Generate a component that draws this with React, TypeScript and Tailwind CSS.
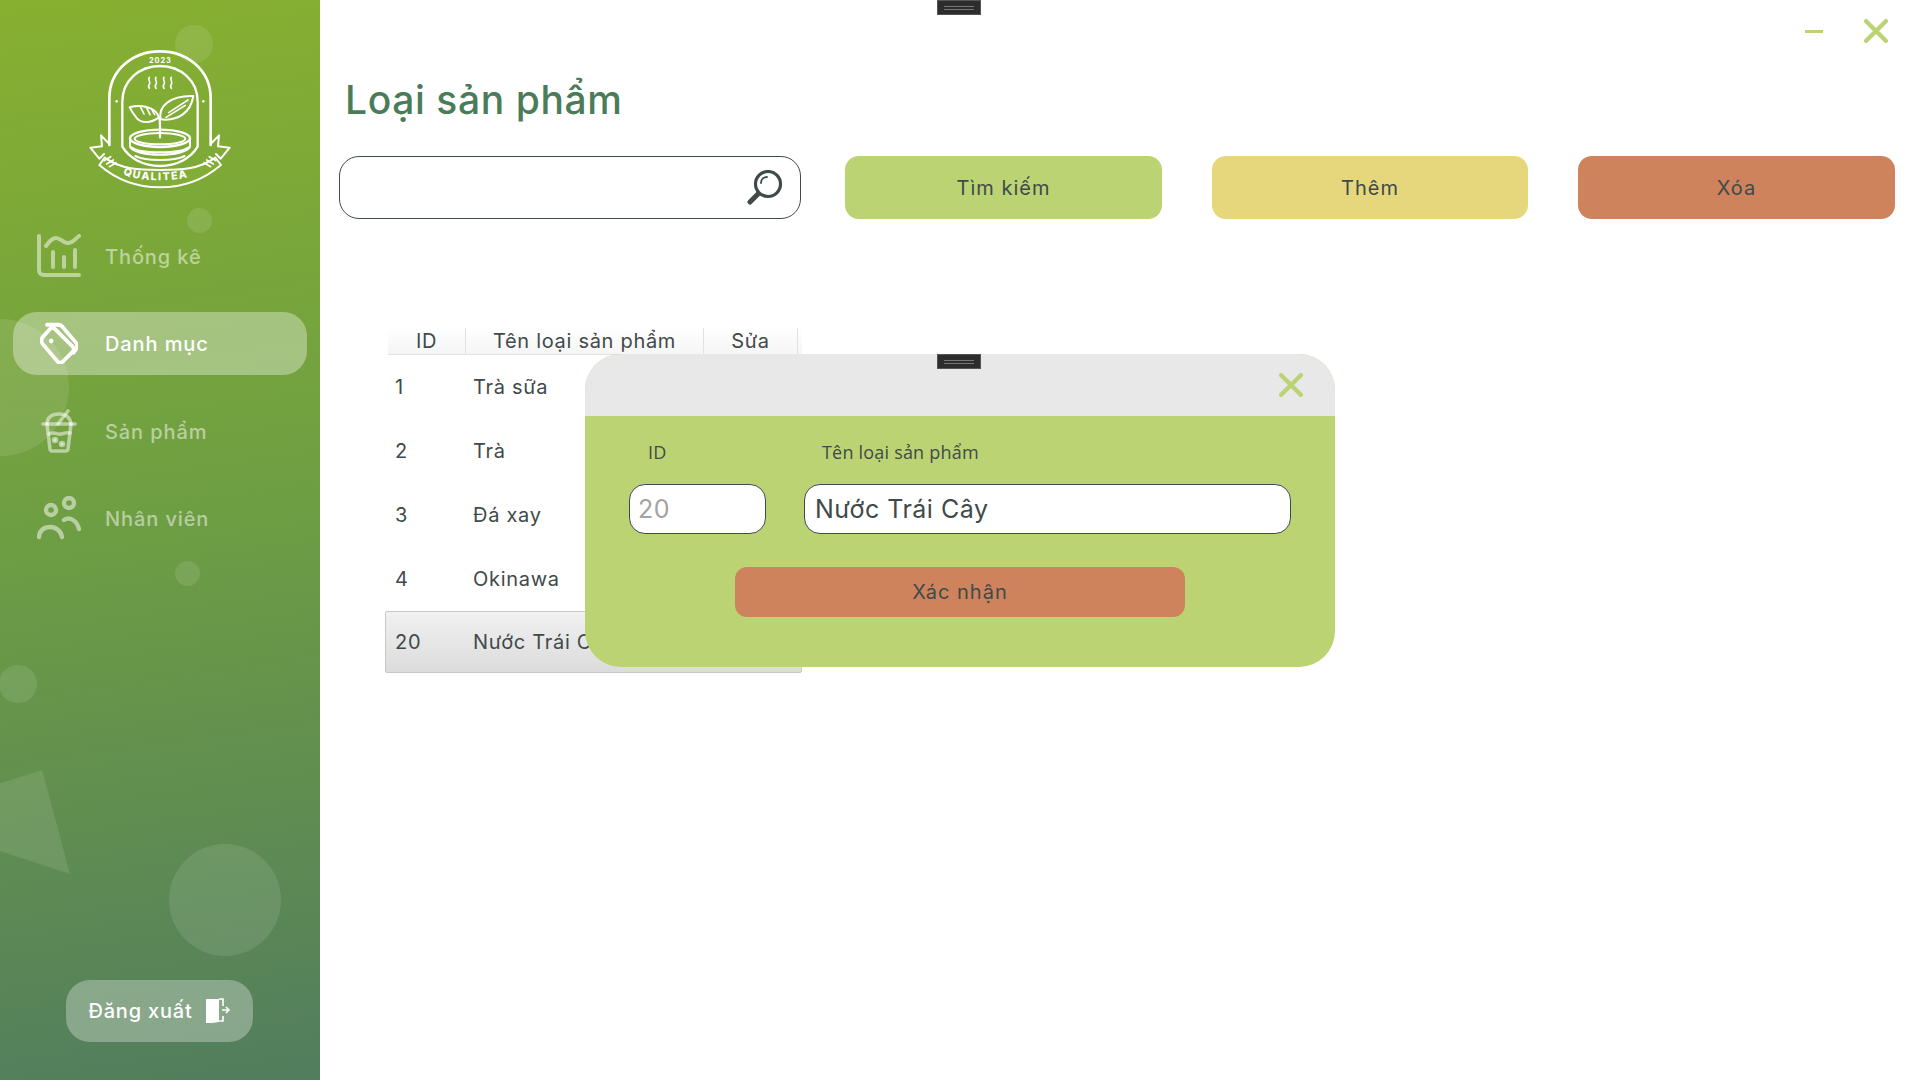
const font = { fontFamily: 'Inter, "Noto Sans", sans-serif' };

const categories = [
  { id: '1', name: 'Trà sữa' },
  { id: '2', name: 'Trà' },
  { id: '3', name: 'Đá xay' },
  { id: '4', name: 'Okinawa' },
  { id: '20', name: 'Nước Trái Cây' },
];

const Logo = () => (
  <svg viewBox="0 0 510 510" className="w-[170px] h-[170px]" fill="none" stroke="#fff" strokeWidth="8" strokeLinecap="round" strokeLinejoin="round">
    <path d="M118 345V205C118 120 188 64 270 64s152 56 152 141v140" />
    <path d="M157 350V215C157 152 208 108 270 108s113 44 113 107v135C362 385 320 408 270 408S178 385 157 350Z" strokeWidth="7" />
    <circle cx="140" cy="214" r="4" fill="#fff" stroke="none" />
    <circle cx="400" cy="214" r="4" fill="#fff" stroke="none" />
    <path d="M238 142c-6 8 6 14 0 21-4 5-2 9 0 12M258 142c-6 8 6 14 0 21-4 5-2 9 0 12M282 142c-6 8 6 14 0 21-4 5-2 9 0 12M304 142c-6 8 6 14 0 21-4 5-2 9 0 12" strokeWidth="5" />
    <path d="M267 262c-24 18-56 20-70-2-8-10-14-20-18-28 30-8 76-4 88 30Z" strokeWidth="6" />
    <path d="M272 268c-8-40 30-72 98-70-8 50-46 76-98 70Z" strokeWidth="6" />
    <path d="M212 232l10 20M228 230l12 24M244 236l10 18M288 262l58-36M296 248l58-38" strokeWidth="5" />
    <path d="M270 322V285c0-12-1-18-3-23" strokeWidth="7" />
    <ellipse cx="270" cy="325" rx="90" ry="26" strokeWidth="7" />
    <ellipse cx="270" cy="326" rx="76" ry="17" strokeWidth="6" />
    <path d="M180 328v22c12 32 168 32 180 0v-22M184 352c24 20 148 20 172 0M196 378c30 16 118 16 148 0" strokeWidth="6" />
    <path d="M88 405C140 450 205 472 270 472s130-22 183-67l-17-22c-50 36-105 37-166 37s-116-1-166-37Z" fill="#82ad36" strokeWidth="6" />
    <path d="M118 342L93 316l3 33-35 4 27 33 14-14M422 342l25-26-3 33 35 4-27 33-14-14" strokeWidth="6" />
    <path d="M102 392l20-12M110 402l20-12M118 410l20-12M438 392l-20-12M430 402l-20-12M422 410l-20-12" strokeWidth="5" />
    <path id="logo-band" d="M155 430C200 458 340 458 388 428" stroke="none" />
    <text fontSize="32" fontWeight="800" fill="#fff" stroke="none" letterSpacing="4.5" style={font}>
      <textPath href="#logo-band" startOffset="4">QUALITEA</textPath>
    </text>
    <text x="271" y="98" textAnchor="middle" fontSize="22" fontWeight="700" fill="#fff" stroke="none" letterSpacing="3" style={font}>2023</text>
  </svg>
);

const ChartIcon = () => (
  <svg viewBox="0 0 44 44" className="w-[44px] h-[44px]" fill="none" stroke="currentColor" strokeWidth="4" strokeLinecap="round" strokeLinejoin="round">
    <path d="M2 2v34c0 3 2 5 5 5h35" />
    <path d="M9 12c3-4 6-8 10-8s6 4 11 5 8-4 12-7" />
    <path d="M16 18v15M27 23v10M38 16v17" />
  </svg>
);

const TagIcon = () => (
  <svg viewBox="0 0 44 44" preserveAspectRatio="none" className="w-[38px] h-[42px]" fill="none" stroke="currentColor" strokeWidth="4.2" strokeLinecap="round" strokeLinejoin="round">
    <path d="M3 16l9-9q2-2 5 0l21 19q2 3 0 5L27 41q-3 3-6 1L4 24q-4-4-1-8Z" />
    <path d="M8 3h13q3 0 5 2l16 17q2 3 0 6l-3 4" />
    <circle cx="13" cy="20" r="2.6" fill="currentColor" strokeWidth="0" />
  </svg>
);

const CupIcon = () => (
  <svg viewBox="0 0 36 44" className="w-[36px] h-[44px]" fill="none" stroke="currentColor" strokeWidth="3.6" strokeLinecap="round" strokeLinejoin="round">
    <path d="M2 15h32" />
    <path d="M6 15c0-7 5-10 12-10 6 0 11 3 12 10" />
    <path d="M17 15L27 2" />
    <path d="M6 15l3 25c0 1 1 2 2 2h14c1 0 2-1 2-2l3-25" />
    <path d="M8 25c5-3 8 1 12 0s6-2 9-1" />
    <circle cx="14" cy="31" r="1.5" fill="currentColor" />
    <circle cx="21" cy="35" r="1.5" fill="currentColor" />
  </svg>
);

const UsersIcon = () => (
  <svg viewBox="0 0 44 44" className="w-[44px] h-[44px]" fill="none" stroke="currentColor" strokeWidth="4.4" strokeLinecap="round">
    <circle cx="14" cy="14" r="5" />
    <circle cx="32" cy="7" r="5" />
    <path d="M2 41c0-6 5-10 11-10s11 4 12 10" />
    <path d="M27 24c6-4 13 1 15 9" />
  </svg>
);

const DoorIcon = () => (
  <svg viewBox="0 0 26 26" className="w-[26px] h-[26px]" fill="none">
    <path d="M1 1h13v23l-7 1H1Z" fill="#fff" />
    <path d="M14 1h4v7M18 18v5h-4M17 12h7M21 9l3 3-3 3" stroke="#fff" strokeWidth="1.6" />
  </svg>
);

const SearchIcon = () => (
  <svg viewBox="0 0 36 36" className="w-[36px] h-[36px]" fill="none" stroke="#3f4a4a" strokeLinecap="round">
    <circle cx="21" cy="14" r="12.5" strokeWidth="3.2" />
    <path d="M14 13c0-4 3-6 6-6" strokeWidth="1.8" />
    <path d="M11 24L3 32" strokeWidth="5" />
  </svg>
);

const CloseIcon = () => (
  <svg viewBox="0 0 22 22" className="h-[24px] w-[24px]" fill="none" stroke="#bbd373" strokeWidth="4" strokeLinecap="round">
    <path d="M2 2l18 18M20 2L2 20" />
  </svg>
);

const DragHandle = ({ className }: { className: string }) => (
  <div className={`absolute top-0 h-[15px] w-[44px] border border-[#555] bg-[#2d2d2d] flex flex-col items-center justify-center gap-[2px] ${className}`}>
    <span className="block h-px w-[30px] bg-[#777]" />
    <span className="block h-px w-[30px] bg-[#777]" />
  </div>
);

const NavItem = ({ icon, label, active }: { icon: React.ReactNode; label: string; active?: boolean }) => (
  <div className={`flex h-[63px] items-center rounded-[24px] pl-[24px] ${active ? 'bg-white/35 text-white' : 'text-white/50'}`}>
    <span className="flex w-[44px] justify-center">{icon}</span>
    <span className="ml-[24px] pt-[2px] text-[20px] font-medium tracking-[0.9px]">{label}</span>
  </div>
);

const App = () => {
  return (
    <div className="relative flex h-screen w-full overflow-hidden bg-white text-[#3f4a4a]" style={font}>
      {/* Sidebar */}
      <aside className="relative flex h-full w-[320px] shrink-0 flex-col overflow-hidden bg-[linear-gradient(172deg,#87b030_0%,#6e9e43_48%,#527d5e_100%)]">
        <span className="absolute left-[175px] top-[25px] h-[38px] w-[38px] rounded-full bg-white/10" />
        <span className="absolute left-[187px] top-[208px] h-[25px] w-[25px] rounded-full bg-white/10" />
        <span className="absolute left-[-68px] top-[319px] h-[137px] w-[137px] rounded-full bg-white/10" />
        <span className="absolute left-[175px] top-[561px] h-[25px] w-[25px] rounded-full bg-white/10" />
        <span className="absolute left-[-1px] top-[665px] h-[38px] w-[38px] rounded-full bg-white/10" />
        <span className="absolute left-[169px] top-[844px] h-[112px] w-[112px] rounded-full bg-white/10" />
        <span className="absolute left-0 top-[770px] h-[104px] w-[70px] bg-white/10 [clip-path:polygon(0_13%,60%_0,100%_100%,0_78%)]" />

        <div className="relative ml-[70px] mt-[30px]">
          <Logo />
        </div>
        <nav className="relative ml-[13px] mt-[24px] flex w-[294px] flex-col gap-[24.5px]">
          <NavItem icon={<ChartIcon />} label="Thống kê" />
          <NavItem icon={<TagIcon />} label="Danh mục" active />
          <NavItem icon={<CupIcon />} label="Sản phẩm" />
          <NavItem icon={<UsersIcon />} label="Nhân viên" />
        </nav>
        <div className="relative mb-[38px] ml-[66px] mt-auto flex h-[62px] w-[187px] items-center justify-center gap-[12px] rounded-[24px] bg-white/30 text-white">
          <span className="text-[20px] font-medium tracking-[0.8px]">Đăng xuất</span>
          <DoorIcon />
        </div>
      </aside>

      {/* Content */}
      <main className="relative flex min-w-0 flex-1 flex-col">
        <DragHandle className="left-[617px]" />
        <div className="absolute left-[1485px] top-[30px] h-[3px] w-[18px] bg-[#bbd373]" />
        <div className="absolute left-[1544px] top-[19px]">
          <CloseIcon />
        </div>

        <h1 className="ml-[25px] mt-[75px] text-[39px] font-medium leading-[50px] tracking-[0.6px] text-[#4a7c59]">Loại sản phẩm</h1>

        <div className="ml-[19px] mt-[31px] flex h-[63px]">
          <div className="flex h-[63px] w-[462px] items-center justify-end rounded-[20px] border border-[#3f4a4a] pr-[17px]">
            <SearchIcon />
          </div>
          <button className="ml-[44px] w-[317px] rounded-[14px] bg-[#bbd373] text-[20px] tracking-[1px]">Tìm kiếm</button>
          <button className="ml-[50px] w-[316px] rounded-[14px] bg-[#e7d77c] text-[20px] tracking-[1px]">Thêm</button>
          <button className="ml-[50px] w-[317px] rounded-[14px] bg-[#ce835d] text-[20px] tracking-[1px]">Xóa</button>
        </div>

        <div className="ml-[65px] mt-[109px] w-[417px] text-[20px] tracking-[0.7px]">
          <div className="ml-[3px] grid h-[27px] grid-cols-[78px_238px_94px] border-b border-[#e2e2e2] bg-gradient-to-b from-white to-[#f5f5f5] text-center leading-[26px]">
            <div className="border-r border-[#e2e2e2]">ID</div>
            <div className="border-r border-[#e2e2e2]">Tên loại sản phẩm</div>
            <div className="border-r border-[#e2e2e2]">Sửa</div>
          </div>
          {categories.map((row) =>
            row.id === '20' ? (
              <div key={row.id} className="flex h-[62px] items-center rounded-[2px] border border-[#c8c8c8] bg-gradient-to-b from-[#f1f1f1] to-[#dcdcdc] pl-[9px]">
                <span className="w-[78px]">{row.id}</span>
                <span>{row.name}</span>
              </div>
            ) : (
              <div key={row.id} className="flex h-[64px] items-center pl-[10px]">
                <span className="w-[78px]">{row.id}</span>
                <span>{row.name}</span>
              </div>
            ),
          )}
        </div>
      </main>

      {/* Edit dialog */}
      <div className="absolute left-[585px] top-[354px] flex h-[313px] w-[750px] flex-col overflow-hidden rounded-[36px] bg-[#bbd373]">
        <DragHandle className="left-[352px]" />
        <div className="flex h-[62px] shrink-0 items-center justify-end bg-[#e8e8e8] pr-[32px]">
          <CloseIcon />
        </div>
        <div className="flex pl-[44px] pt-[26px]">
          <div className="w-[137px]">
            <div className="ml-[19px] h-[20px] text-[18px] leading-[20px] tracking-[0.2px]" style={{ fontFamily: '"Open Sans", sans-serif' }}>ID</div>
            <div className="mt-[22px] flex h-[50px] items-center rounded-[16px] border border-[#3f4a4a] bg-white pl-[8px] pt-[2px] text-[25px] tracking-[0.5px] text-[#a3a3a3]">20</div>
          </div>
          <div className="ml-[38px] w-[487px]">
            <div className="ml-[18px] h-[20px] text-[18px] leading-[20px] tracking-[0.2px]" style={{ fontFamily: '"Open Sans", sans-serif' }}>Tên loại sản phẩm</div>
            <div className="mt-[22px] flex h-[50px] items-center rounded-[16px] border border-[#3f4a4a] bg-white pl-[10px] pt-[2px] text-[25px] tracking-[0.5px]">Nước Trái Cây</div>
          </div>
        </div>
        <button className="ml-[150px] mt-[33px] h-[50px] w-[450px] rounded-[12px] bg-[#ce835d] text-[20px] tracking-[1px]">Xác nhận</button>
      </div>
    </div>
  );
};

export default App;
